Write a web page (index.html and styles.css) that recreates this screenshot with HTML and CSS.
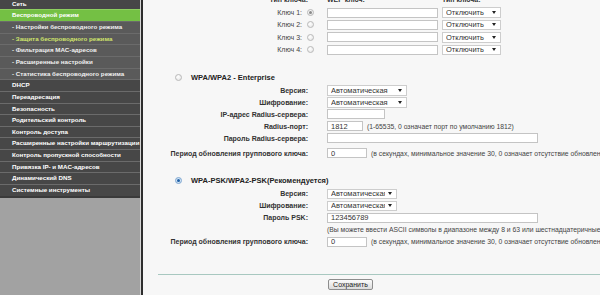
FILE: index.html
```html
<!DOCTYPE html>
<html lang="ru">
<head>
    <meta charset="UTF-8">
    <title>Защита беспроводного режима</title>
    <link rel="stylesheet" href="styles.css">
</head>
<body>
    <div class="page">
        <nav class="side">
            <ul class="menu">
                <li class="main">Сеть</li>
                <li class="main active">Беспроводной режим</li>
                <li class="sub">- Настройки беспроводного режима</li>
                <li class="sub current">- Защита беспроводного режима</li>
                <li class="sub">- Фильтрация MAC-адресов</li>
                <li class="sub">- Расширенные настройки</li>
                <li class="sub">- Статистика беспроводного режима</li>
                <li class="main">DHCP</li>
                <li class="main">Переадресация</li>
                <li class="main">Безопасность</li>
                <li class="main">Родительский контроль</li>
                <li class="main">Контроль доступа</li>
                <li class="main">Расширенные настройки маршрутизации</li>
                <li class="main">Контроль пропускной способности</li>
                <li class="main">Привязка IP- и MAC-адресов</li>
                <li class="main">Динамический DNS</li>
                <li class="main last">Системные инструменты</li>
            </ul>
        </nav>

        <div class="frame">
            <main class="content">
                <div class="row head">
                    <span class="lbl">Тип ключа:</span>
                    <span class="col-key">WEP ключ:</span>
                    <span class="col-type">Тип ключа:</span>
                </div>
                <div class="row key">
                    <span class="lbl">Ключ 1:</span>
                    <span class="radio on"></span>
                    <input class="inp w-key" type="text" value="">
                    <span class="sel w-off"><span class="sel-text">Отключить</span></span>
                </div>
                <div class="row key">
                    <span class="lbl">Ключ 2:</span>
                    <span class="radio"></span>
                    <input class="inp w-key" type="text" value="">
                    <span class="sel w-off"><span class="sel-text">Отключить</span></span>
                </div>
                <div class="row key">
                    <span class="lbl">Ключ 3:</span>
                    <span class="radio"></span>
                    <input class="inp w-key" type="text" value="">
                    <span class="sel w-off"><span class="sel-text">Отключить</span></span>
                </div>
                <div class="row key">
                    <span class="lbl">Ключ 4:</span>
                    <span class="radio"></span>
                    <input class="inp w-key" type="text" value="">
                    <span class="sel w-off"><span class="sel-text">Отключить</span></span>
                </div>

                <div class="section-head enterprise">
                    <span class="radio"></span>
                    <span class="title">WPA/WPA2 - Enterprise</span>
                </div>
                <div class="row">
                    <span class="lbl">Версия:</span>
                    <span class="sel ctl w-auto"><span class="sel-text">Автоматическая</span></span>
                </div>
                <div class="row">
                    <span class="lbl">Шифрование:</span>
                    <span class="sel ctl w-auto"><span class="sel-text">Автоматическая</span></span>
                </div>
                <div class="row">
                    <span class="lbl">IP-адрес Radius-сервера:</span>
                    <input class="inp ctl w-ip" type="text" value="">
                </div>
                <div class="row">
                    <span class="lbl">Radius-порт:</span>
                    <input class="inp ctl w-port" type="text" value="1812">
                    <span class="note">(1-65535, 0 означает порт по умолчанию 1812)</span>
                </div>
                <div class="row">
                    <span class="lbl">Пароль Radius-сервера:</span>
                    <input class="inp ctl w-pass" type="text" value="">
                </div>
                <div class="row spaced">
                    <span class="lbl">Период обновления группового ключа:</span>
                    <input class="inp ctl w-group" type="text" value="0">
                    <span class="note">(в секундах, минимальное значение 30, 0 означает отсутствие обновления)</span>
                </div>

                <div class="section-head psk">
                    <span class="radio blue"></span>
                    <span class="title">WPA-PSK/WPA2-PSK(Рекомендуется)</span>
                </div>
                <div class="row">
                    <span class="lbl">Версия:</span>
                    <span class="sel ctl w-auto-s"><span class="sel-text">Автоматическая</span></span>
                </div>
                <div class="row">
                    <span class="lbl">Шифрование:</span>
                    <span class="sel ctl w-auto-s"><span class="sel-text">Автоматическая</span></span>
                </div>
                <div class="row">
                    <span class="lbl">Пароль PSK:</span>
                    <input class="inp ctl w-pass" type="text" value="123456789">
                </div>
                <div class="row">
                    <span class="lbl"></span>
                    <span class="note ctl">(Вы можете ввести ASCII символы в диапазоне между 8 и 63 или шестнадцатеричные символы в диапазоне между 8 и 64.)</span>
                </div>
                <div class="row">
                    <span class="lbl">Период обновления группового ключа:</span>
                    <input class="inp ctl w-group" type="text" value="0">
                    <span class="note">(в секундах, минимальное значение 30, 0 означает отсутствие обновления)</span>
                </div>

                <div class="sep"></div>
                <button class="save" type="button">Сохранить</button>
            </main>
            <div class="scroll"><span class="grip"></span></div>
        </div>
    </div>
</body>
</html>
```

FILE: styles.css
```css
* {
    margin: 0;
    padding: 0;
    box-sizing: border-box;
}

body {
    font-family: "Liberation Sans", Arial, sans-serif;
    background: #f7f7f7;
    width: 600px;
    height: 295px;
    overflow: hidden;
}

.page {
    display: flex;
    height: 295px;
}

/* left menu */

.side {
    width: 141px;
    flex-shrink: 0;
    background: #a2a2a2;
    border-right: 1px solid #d6d6d6;
    overflow: hidden;
}

.menu {
    list-style: none;
    margin-top: -2.4px;
}

.menu li {
    height: 11.67px;
    line-height: 10.4px;
    border-top: 1px solid #6b6b6b;
    padding-left: 12px;
    font-size: 6.2px;
    font-weight: bold;
    color: #fff;
    white-space: nowrap;
    overflow: hidden;
}

.menu .main {
    background: #474747;
}

.menu .sub {
    background: #5a5a5a;
    color: #f0f0f0;
}

.menu .active {
    background: #74c044;
    border-top-color: #8ed060;
}

.menu .current {
    color: #cfe46c;
}

.menu .last {
    height: 13.5px;
    border-bottom: 2px solid #3a3a3a;
}

/* content frame */

.frame {
    flex: 1;
    display: flex;
    border-left: 2px solid #2e2e2e;
    background: #f7f7f7;
}

.content {
    flex: 1;
    overflow: hidden;
    color: #333;
}

.scroll {
    width: 4px;
    margin-top: 27px;
    border-left: 1px solid #b8b8b8;
    background: #efefef;
    padding-top: 126px;
}

.grip {
    display: block;
    width: 3px;
    height: 5px;
    border-top: 1px solid #999;
    border-bottom: 1px solid #999;
}

.row {
    display: flex;
    align-items: center;
    height: 12px;
    white-space: nowrap;
}

.lbl {
    width: 165px;
    flex-shrink: 0;
    text-align: right;
    font-size: 7px;
    font-weight: bold;
    color: #333;
}

.ctl {
    margin-left: 19px;
}

.row.head {
    height: 14.4px;
    margin-top: -8px;
}

.col-key {
    width: 115px;
    margin-left: 19px;
    font-size: 7px;
    font-weight: bold;
}

.col-type {
    font-size: 7px;
    font-weight: bold;
}

.row.key {
    height: 12.4px;
}

.row.key .lbl {
    width: 159px;
    font-weight: normal;
    color: #444;
}

.row.key .radio {
    margin-left: 5px;
}

.row.key .inp {
    margin-left: 13px;
}

.row.key .sel {
    margin-left: 4px;
}

.row.spaced {
    margin-top: 3px;
}

/* section headings */

.section-head {
    display: flex;
    align-items: center;
    height: 14px;
    padding-left: 32px;
    white-space: nowrap;
}

.section-head.enterprise {
    margin-top: 14.5px;
}

.section-head.psk {
    margin-top: 14px;
    margin-bottom: 0.5px;
}

.section-head .title {
    margin-left: 9px;
    font-size: 7.5px;
    font-weight: bold;
    color: #222;
}

/* form controls */

.radio {
    width: 7px;
    height: 7px;
    flex-shrink: 0;
    border-radius: 50%;
    border: 1px solid #b9b9b9;
    background: radial-gradient(circle at 40% 35%, #fff, #e2e2e2);
    display: flex;
    align-items: center;
    justify-content: center;
}

.radio.on::after,
.radio.blue::after {
    content: "";
    width: 3px;
    height: 3px;
    border-radius: 50%;
    background: #8a8a8a;
}

.radio.blue {
    border-color: #7ea6cf;
    background: radial-gradient(circle, #e4f0fb, #c4dcf2);
}

.radio.blue::after {
    background: #1f5fa6;
}

.inp {
    height: 10px;
    flex-shrink: 0;
    border: 1px solid #c4c4c4;
    background: #fff;
    padding: 0 3px;
    font-family: "Liberation Sans", Arial, sans-serif;
    font-size: 7.5px;
    color: #333;
    outline: none;
}

.sel {
    display: flex;
    align-items: center;
    height: 10.5px;
    flex-shrink: 0;
    border: 1px solid #cdcdcd;
    background: #fff;
    padding: 0 4px 0 3px;
    font-size: 7.5px;
    color: #333;
    overflow: hidden;
}

.sel-text {
    flex: 1;
    overflow: hidden;
    white-space: nowrap;
}

.sel::after {
    content: "";
    flex-shrink: 0;
    margin-left: 3px;
    border-left: 2.5px solid transparent;
    border-right: 2.5px solid transparent;
    border-top: 3px solid #222;
}

.w-key { width: 111px; }
.w-off { width: 59px; }
.w-auto { width: 80px; }
.w-auto-s { width: 70px; }
.w-ip { width: 58px; }
.w-port { width: 36px; }
.w-pass { width: 211px; }
.w-group { width: 40px; }

.note {
    margin-left: 4px;
    font-size: 6.8px;
    color: #444;
}

.note.ctl {
    margin-left: 19px;
}

.sep {
    margin: 26px 3px 0 15px;
    border-top: 1px solid #a8c8c0;
}

.save {
    display: block;
    margin: 4px 0 0 185px;
    width: 45px;
    height: 11px;
    border: 1px solid #8d8d8d;
    border-radius: 2px;
    background: linear-gradient(#fbfbfb, #dcdcdc);
    font-family: "Liberation Sans", Arial, sans-serif;
    font-size: 7px;
    color: #222;
}
```
